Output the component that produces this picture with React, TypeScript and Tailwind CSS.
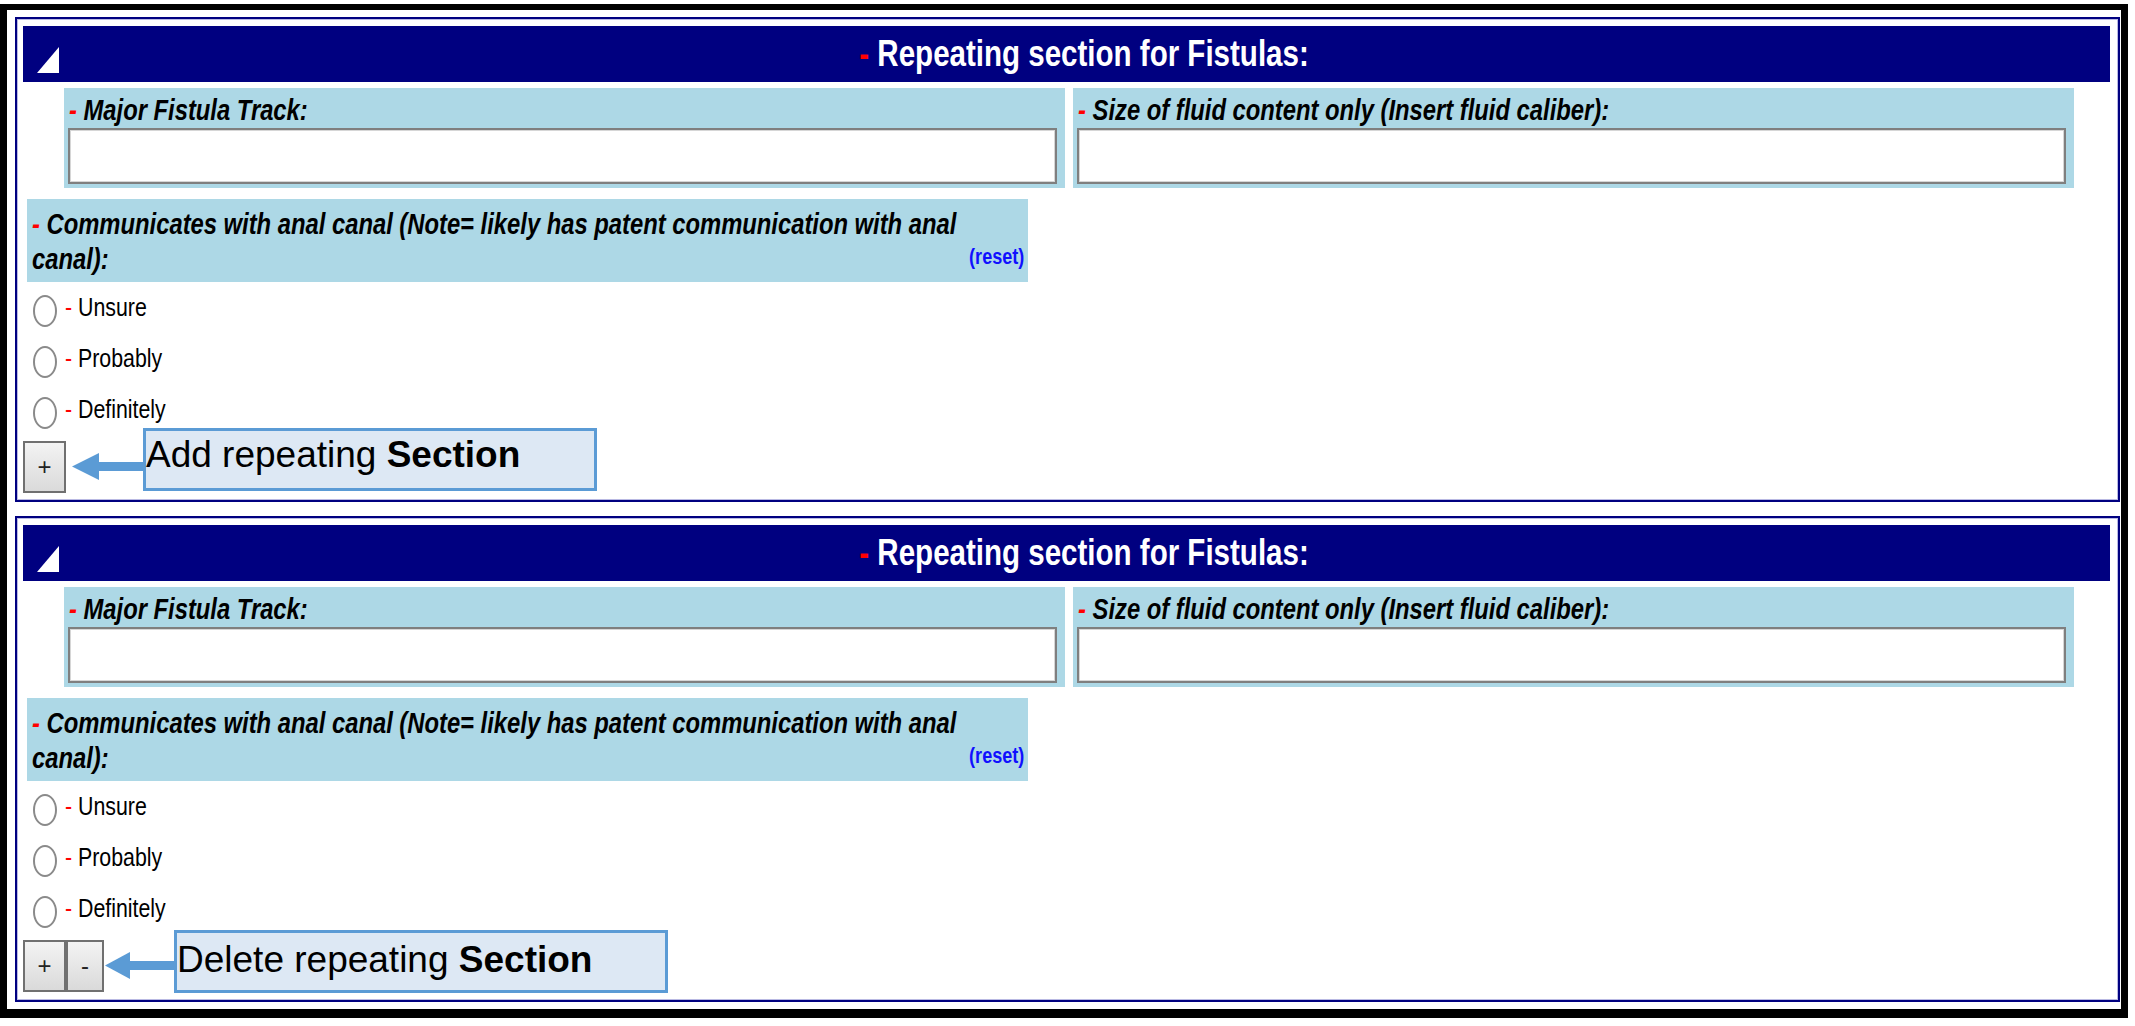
import { ReactNode } from 'react'

const arial = "font-['Liberation_Sans',Arial,sans-serif]"

// the source renders Arial squeezed horizontally (~82%); no narrow face is installed, so squeeze it
function Narrow({ children, origin = 'origin-left' }: { children: ReactNode; origin?: string }) {
  return <span className={`inline-block whitespace-nowrap scale-x-[0.82] ${origin}`}>{children}</span>
}

function Dash() {
  return <span className="text-[#ff0000]">- </span>
}

function TextField({ label }: { label: string }) {
  return (
    <div className="w-[1001px] h-[100px] bg-[#add8e6] pl-[4px] pr-[8px] flex flex-col">
      <div className={`${arial} h-[40px] pt-[2px] pl-[1px] text-[29px] leading-[40px] font-bold italic text-black`}>
        <Narrow>
          <Dash />
          {label}
        </Narrow>
      </div>
      <div className="h-[56px] bg-white border-2 border-[#7f7f7f] shadow-[inset_0_0_0_1px_#d6d6d6]" />
    </div>
  )
}

function Radio({ label }: { label: string }) {
  return (
    <div className="h-[51px] flex items-center">
      <span className="ml-[10px] mt-[6px] w-[24px] h-[32px] shrink-0 rounded-[50%] border-2 border-[#8a8a8a] bg-white" />
      <span className={`${arial} ml-[8px] text-[26px] leading-[51px] text-black`}>
        <Narrow>
          <Dash />
          {label}
        </Narrow>
      </span>
    </div>
  )
}

function Btn({ children, w }: { children: ReactNode; w: string }) {
  return (
    <div
      className={`${w} h-[52px] border-2 border-[#707070] bg-gradient-to-b from-[#f3f3f3] to-[#dadada] flex items-center justify-center ${arial} text-[24px] text-[#222]`}
    >
      {children}
    </div>
  )
}

function Arrow({ w, head }: { w: number; head: number }) {
  return (
    <svg width={w} height={27} viewBox={`0 0 ${w} 27`} className="shrink-0">
      <polygon points={`0,13.5 ${head},0 ${head},27`} fill="#5b9bd5" />
      <rect x={head - 1} y={9} width={w - head + 1} height={9} fill="#5b9bd5" />
    </svg>
  )
}

function Callout({ children, w, top, pt }: { children: ReactNode; w: string; top: string; pt: string }) {
  return (
    <div
      className={`${w} ${top} ${pt} h-[63px] shrink-0 border-[3px] border-[#5b9bd5] bg-[#dde8f4] ${arial} text-[37px] leading-none text-black whitespace-nowrap`}
    >
      {children} <span className="font-bold">Section</span>
    </div>
  )
}

interface SectionProps {
  height: string
  withMinus?: boolean
  note: string
}

function Section({ height, withMinus, note }: SectionProps) {
  return (
    <div className={`${height} border-2 border-[#000080] shadow-[inset_0_0_0_1px_#b9b9e3] pl-[6px] pr-[8px] pt-[7px] flex flex-col`}>
      {/* section header */}
      <div className="h-[56px] bg-[#000080] flex items-center">
        <svg width="22" height="26" viewBox="0 0 22 26" className="ml-[14px] self-end mb-[9px] shrink-0">
          <polygon points="0,26 22,26 22,0" fill="#ffffff" />
        </svg>
        <div className={`${arial} flex-1 text-center text-[36px] leading-none font-bold text-white`}>
          <Narrow origin="origin-center">
            <Dash />
            Repeating section for Fistulas:
          </Narrow>
        </div>
      </div>

      <div className="mt-[6px] pl-[41px] flex gap-[8px]">
        <TextField label="Major Fistula Track:" />
        <TextField label="Size of fluid content only (Insert fluid caliber):" />
      </div>

      <div className={`${arial} mt-[11px] ml-[4px] w-[1001px] bg-[#add8e6] pl-[5px] pr-[4px] pt-[8px] pb-[5px] text-[29px] leading-[35px] font-bold italic text-black`}>
        <div>
          <Narrow>
            <Dash />
            Communicates with anal canal (Note= likely has patent communication with anal
          </Narrow>
        </div>
        <div className="flex justify-between items-start">
          <Narrow>canal):</Narrow>
          <span className="not-italic text-[22px] leading-[29px] text-[#1010ff]">
            <Narrow origin="origin-right">(reset)</Narrow>
          </span>
        </div>
      </div>

      <Radio label="Unsure" />
      <Radio label="Probably" />
      <Radio label="Definitely" />

      <div className="mt-[6px] h-[52px] flex items-start">
        {withMinus ? (
          <>
            <Btn w="w-[43px]">+</Btn>
            <Btn w="w-[38px]">-</Btn>
            <div className="mt-[12px] ml-[1px]">
              <Arrow w={69} head={25} />
            </div>
            <Callout w="w-[494px]" top="-mt-[10px]" pt="pt-[8px]">
              {note}
            </Callout>
          </>
        ) : (
          <>
            <Btn w="w-[43px]">+</Btn>
            <div className="mt-[12px] ml-[6px]">
              <Arrow w={71} head={27} />
            </div>
            <Callout w="w-[454px]" top="-mt-[13px]" pt="pt-[5px]">
              {note}
            </Callout>
          </>
        )}
      </div>
    </div>
  )
}

export default function App() {
  return (
    <div className="w-[2135px] h-[1026px] bg-white pt-[4px]">
      <div className="w-[2128px] h-[1014px] border-black border-l-[7px] border-r-[7px] border-t-[6px] border-b-[9px] pl-[8px] pr-[1px] pt-[7px] flex flex-col gap-[14px]">
        <Section height="h-[485px]" note="Add repeating" />
        <Section height="h-[486px]" withMinus note="Delete repeating" />
      </div>
    </div>
  )
}
